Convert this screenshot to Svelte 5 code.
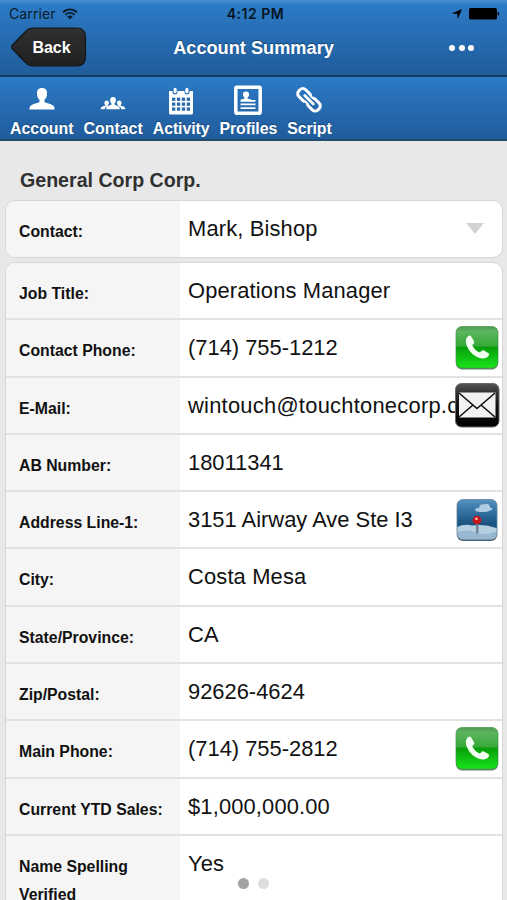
<script lang="ts">
  type Row = { label: string; value: string; action?: "phone" | "mail" | "map" };

  const tabs = ["Account", "Contact", "Activity", "Profiles", "Script"];

  const rows: Row[] = [
    { label: "Job Title:", value: "Operations Manager" },
    { label: "Contact Phone:", value: "(714) 755-1212", action: "phone" },
    { label: "E-Mail:", value: "wintouch@touchtonecorp.com", action: "mail" },
    { label: "AB Number:", value: "18011341" },
    { label: "Address Line-1:", value: "3151 Airway Ave Ste I3", action: "map" },
    { label: "City:", value: "Costa Mesa" },
    { label: "State/Province:", value: "CA" },
    { label: "Zip/Postal:", value: "92626-4624" },
    { label: "Main Phone:", value: "(714) 755-2812", action: "phone" },
    { label: "Current YTD Sales:", value: "$1,000,000.00" },
    { label: "Name Spelling Verified", value: "Yes" },
  ];

  let activePage = $state(0);
</script>

<div class="screen">
  <header>
    <div class="status-bar">
      <div class="carrier">
        <span>Carrier</span>
        <svg width="16" height="12" viewBox="0 0 16 12" fill="none" stroke="#0b1c2c" stroke-width="1.8">
          <path d="M1 4.4C5 .4 11 .4 15 4.4" />
          <path d="M3.4 6.8c2.7-2.5 6.5-2.5 9.2 0" />
          <path d="M5.3 8.5c1.6-1.5 3.8-1.5 5.4 0L8 11.4z" fill="#0b1c2c" stroke="none" />
        </svg>
      </div>
      <span class="time">4:12 PM</span>
      <div class="battery">
        <svg width="12" height="12" viewBox="0 0 12 12">
          <path d="M11 1 6.9 11 6.3 6.1.8 5.5z" />
        </svg>
        <svg width="31" height="12" viewBox="0 0 31 12">
          <rect x="0" y="0" width="28" height="11.5" rx="1.5" />
          <path d="M28.7 3.8c2 .6 2 3.4 0 4z" />
        </svg>
      </div>
    </div>
    <div class="title-bar">
      <button class="back" type="button">
        <svg width="77" height="42" viewBox="0 0 77 42">
          <defs>
            <linearGradient id="back-fill" x2="0" y2="1">
              <stop offset="0" stop-color="#303030" />
              <stop offset="1" stop-color="#202020" />
            </linearGradient>
          </defs>
          <path
            d="M23 1h43.500q9 0 9 9v20q0 9-9 9H23q-5 0-8-4L2.500 22q-2-2 0-4L15 5q3-4 8-4z"
            fill="url(#back-fill)"
            stroke="#10161c"
            stroke-width="1.2"
          />
        </svg>
        <span>Back</span>
      </button>
      <h1>Account Summary</h1>
      <button class="more" type="button" aria-label="More">
        <i></i><i></i><i></i>
      </button>
    </div>
  </header>

  <nav>
    {#each tabs as tab}
      <button class="tab" type="button">
        <span class="tab-icon">
          {#if tab === "Account"}
            <svg width="26" height="30" viewBox="0 0 26 30" fill="#fff">
              <path d="M13 3c-3.500 0-5.200 2.200-5 5.500 0 3.200 1.100 5.300 2.500 6.300V17c-1.200 1-8.500 2.300-9.500 4.500-.6 1-.6 2-.5 3h25c.1-1 .1-2-.5-3-1-2.200-8.300-3.500-9.500-4.500v-2.200c1.400-1 2.500-3.100 2.500-6.300.2-3.300-1.500-5.500-5-5.500z" />
            </svg>
          {:else if tab === "Contact"}
            <svg width="26" height="30" viewBox="0 0 26 30" fill="#fff">
              <path d="M13 12c-2 0-3 1.300-2.900 3.200.1 1.700.7 2.600 1.400 3.200v1.200c-.8.9-4.600 1.200-5.100 3.100l-.2 1.500h13.600l-.2-1.500c-.5-1.900-4.300-2.200-5.100-3.100v-1.200c.7-.6 1.300-1.500 1.400-3.200C16 13.300 15 12 13 12z" />
              <path d="M6.800 15.500c2.600 0 2.700 3.500 1 4.800v.6c-1 .5-2.700.9-3.100 3.300H.7c0-3 2.800-2.700 4.600-3.400v-.6c-1.600-1.500-1-4.700 1.500-4.700z" />
              <path d="M19.200 15.500c-2.600 0-2.700 3.500-1 4.800v.6c1 .5 2.700.9 3.100 3.300h4c0-3-2.800-2.700-4.600-3.400v-.6c1.600-1.500 1-4.700-1.500-4.700z" />
            </svg>
          {:else if tab === "Activity"}
            <svg width="26" height="30" viewBox="0 0 26 30">
              <path d="M1 6h3.500v1.500q0 2 2.500 2t2.500-2V6h7v1.500q0 2 2.500 2t2.500-2V6H25v22q0 1.500-1.500 1.500h-21Q1 29.500 1 28z" fill="#fff" />
              <rect x="5.600" y="2.800" width="3" height="5.400" rx="1.500" fill="#fff" />
              <rect x="17.400" y="2.800" width="3" height="5.400" rx="1.500" fill="#fff" />
              <g fill="#2a6bad">
                {#each [12.600, 17.500, 22.400] as y}
                  {#each [4, 8.900, 13.800, 18.700] as x}
                    <rect {x} {y} width="3.300" height="3.300" />
                  {/each}
                {/each}
              </g>
            </svg>
          {:else if tab === "Profiles"}
            <svg width="28" height="30" viewBox="0 0 28 30" fill="#fff">
              <rect x="1.800" y="2.300" width="24.400" height="26" rx="1" fill="none" stroke="#fff" stroke-width="3.500" />
              <circle cx="12" cy="9.500" r="3.100" />
              <path d="M10.500 11h3v2.500l4 1.200v2H6.500v-2l4-1.200z" />
              <path d="M6.500 18.500h15v1.700h-15zM6.500 22.200h15v1.700h-15zM16.500 15h5v1.700h-5z" />
            </svg>
          {:else}
            <svg width="26" height="30" viewBox="0 0 26 30" fill="none">
              <g transform="translate(13 14.800) rotate(45)" stroke="#fff" stroke-width="3">
                <rect x="-13.500" y="-4.800" width="13.500" height="9.600" rx="4" />
                <rect x="0" y="-4.800" width="13.500" height="9.600" rx="4" />
                <path d="M-4 0H4" stroke="#276aad" stroke-width="5.600" />
                <path d="M-6 0H6" stroke-width="2.800" stroke-linecap="round" />
              </g>
            </svg>
          {/if}
        </span>
        <span class="tab-label">{tab}</span>
      </button>
    {/each}
  </nav>

  <main>
    <h2>General Corp Corp.</h2>

    <div class="card contact">
      <div class="row">
        <div class="label">Contact:</div>
        <div class="value">Mark, Bishop</div>
        <svg class="caret" width="18" height="11" viewBox="0 0 18 11">
          <path d="M0 0h18L9 11z" fill="#d2d2d2" />
        </svg>
      </div>
    </div>

    <div class="card details">
      {#each rows as row}
        <div class="row">
          <div class="label">{row.label}</div>
          <div
            class="value"
            class:numeric={/^[\d(]/.test(row.value)}
            class:email={row.action === "mail"}
          >
            {row.value}
          </div>
          {#if row.action}
            <button class="action" type="button" aria-label={row.action}>
              {#if row.action === "phone"}
                <svg width="44" height="45" viewBox="0 0 44 45">
                  <defs>
                    <linearGradient id="phone-fill" x2="0" y2="1">
                      <stop offset="0" stop-color="#4f9a52" />
                      <stop offset=".12" stop-color="#5cb55f" />
                      <stop offset=".47" stop-color="#36aa38" />
                      <stop offset=".5" stop-color="#079d0a" />
                      <stop offset="1" stop-color="#18e51b" />
                    </linearGradient>
                  </defs>
                  <rect x="1" y="2" width="42" height="42" rx="6" fill="#64826a" />
                  <rect x="1" y="1" width="42" height="41.500" rx="6" fill="url(#phone-fill)" stroke="#43964a" stroke-width=".7" />
                  <path d="M13 10.700c1.300-1.200 2.300-1 3 .1l2.900 4.700c.7 1.400.4 2.100-.8 3.100-1 .9-.8 1.500-.2 2.500 1.500 2.500 3.400 4.200 5.700 5.400 1.100.6 1.700.4 2.400-.5.9-1.200 1.800-1.600 2.900-1l4.300 2.500c1.200.8 1.200 1.800.4 2.800-1.700 2.200-4 2.900-6.400 2.600C18 31.900 11 22.500 10.900 15.900c0-2.200.7-3.900 2.100-5.200z" fill="#f4fff4" />
                </svg>
              {:else if row.action === "mail"}
                <svg width="46" height="46" viewBox="0 0 46 46">
                  <defs>
                    <linearGradient id="mail-fill" x2="0" y2="1">
                      <stop offset="0" stop-color="#555" />
                      <stop offset=".2" stop-color="#343434" />
                      <stop offset=".5" stop-color="#111" />
                      <stop offset="1" stop-color="#000" />
                    </linearGradient>
                  </defs>
                  <rect x="1.500" y="1.500" width="43.500" height="43.500" rx="6" fill="url(#mail-fill)" stroke="#686868" />
                  <path d="M5 10.500h36.500v25H5z" fill="#f2f2f2" />
                  <path d="m5 11 18 15.500L41 11M5 35l14-12M41 35 27 23" fill="none" stroke="#111" stroke-width="1.600" />
                </svg>
              {:else}
                <svg width="42" height="43" viewBox="0 0 42 43">
                  <defs>
                    <linearGradient id="sky" x2="0" y2="1">
                      <stop offset="0" stop-color="#5c97c2" />
                      <stop offset=".25" stop-color="#3a77a8" />
                      <stop offset=".6" stop-color="#195481" />
                      <stop offset="1" stop-color="#28648f" />
                    </linearGradient>
                    <clipPath id="tile"><rect x="1" y="1" width="40" height="40" rx="6" /></clipPath>
                  </defs>
                  <rect x="1" y="2" width="40" height="40.500" rx="6" fill="#4c5962" />
                  <g clip-path="url(#tile)">
                    <path d="M0 0h42v42H0z" fill="url(#sky)" />
                    <path d="M0 29q8-4 16-2 13-2 26 3v12H0z" fill="#b5cfe2" />
                    <path d="M0 34q12-4 20 0t22-2v10H0z" fill="#8baecb" opacity=".7" />
                    <path d="M19 12c0-2 2-3 4-2 0-4 3-5 5-4 3-2 6 0 6 3 3 0 3 3 0 3-3 2-12 2-15 0z" fill="#aecde2" />
                    <path d="M20 23h2.500v12H20z" fill="#6f8391" />
                    <circle cx="21" cy="21.500" r="4.300" fill="#c5161c" />
                    <circle cx="20.500" cy="20.300" r="1.400" fill="#ffb5b0" />
                  </g>
                  <rect x="1" y="1" width="40" height="40.500" rx="6" fill="none" stroke="#608298" stroke-width=".8" />
                </svg>
              {/if}
            </button>
          {/if}
        </div>
      {/each}
    </div>
  </main>

  <div class="pager">
    {#each [0, 1] as page}
      <button
        class="page-dot"
        class:active={page === activePage}
        type="button"
        aria-label="Page {page + 1}"
        onclick={() => (activePage = page)}
      ></button>
    {/each}
  </div>
</div>

<style>
  :global(body) {
    background: #e8e8e8;
  }

  .screen {
    position: relative;
    width: 507px;
    height: 900px;
    overflow: hidden;
    box-sizing: border-box;
    background: #e8e8e8;
    font-family: "Liberation Sans", Arial, sans-serif;
    color: #111;
  }

  .screen * {
    box-sizing: border-box;
  }

  button {
    padding: 0;
    border: none;
    background: none;
    font: inherit;
    color: inherit;
    cursor: pointer;
  }

  svg {
    display: block;
  }

  header {
    height: 77px;
    background: linear-gradient(#4b91d3, #2c7ac6 5px, #205c9b);
    border-bottom: 2px solid #103b60;
  }

  .status-bar {
    display: grid;
    grid-template-columns: 1fr auto 1fr;
    align-items: center;
    height: 27px;
    padding: 0 7px 0 9px;
    font-family: Inter, "Liberation Sans", sans-serif;
    font-size: 14px;
    color: #0b1c2c;
  }

  .carrier {
    display: flex;
    align-items: center;
    gap: 6px;
    letter-spacing: 0.1px;
  }

  .time {
    margin-left: 2px;
    font-size: 14px;
    font-weight: 600;
    letter-spacing: 0.5px;
    color: #071522;
  }

  .battery {
    display: flex;
    justify-content: flex-end;
    gap: 6px;
  }

  .title-bar {
    display: grid;
    grid-template-columns: 1fr auto 1fr;
    align-items: center;
    height: 42px;
    padding: 0 33px 0 10px;
    color: #fff;
    text-shadow: 0 -1px 1px rgba(0, 25, 60, 0.5);
  }

  .back {
    display: grid;
    width: 77px;
    height: 42px;
    align-items: center;
    font-size: 16px;
    font-weight: 700;
  }

  .back svg,
  .back span {
    grid-area: 1 / 1;
  }

  .back span {
    padding: 0 0 0 6px;
  }

  h1 {
    margin: 1px 0 0 23px;
    font-size: 18.2px;
    font-weight: 700;
    white-space: nowrap;
  }

  .more {
    display: flex;
    gap: 3.5px;
    justify-self: end;
  }

  .more i {
    width: 6px;
    height: 6px;
    border-radius: 50%;
    background: #fff;
  }

  nav {
    display: flex;
    align-items: flex-start;
    gap: 10px;
    height: 64px;
    padding: 8px 10px 0;
    background: linear-gradient(#2c7ac6, #205c9b);
    border-bottom: 2px solid #234c70;
    color: #fff;
  }

  .tab {
    display: flex;
    flex-direction: column;
    align-items: center;
  }

  .tab-icon {
    height: 33px;
  }

  .tab-label {
    font-size: 15.9px;
    font-weight: 700;
    line-height: 22px;
    text-shadow: 0 -1px 1px rgba(0, 25, 60, 0.4);
  }

  .tab:nth-child(n + 3) .tab-label {
    letter-spacing: -0.08px;
  }

  h2 {
    height: 59px;
    margin: 0;
    padding: 28px 20px 0;
    font-size: 19.6px;
    font-weight: 700;
    line-height: 22px;
    color: #303030;
  }

  .card {
    margin: 0 4px 4px 5px;
    overflow: hidden;
    border: 1px solid #d6d6d6;
    border-radius: 10px;
    background: #fff;
  }

  .contact {
    height: 58px;
  }

  .details {
    border-radius: 10px 10px 0 0;
  }

  .row {
    position: relative;
    display: flex;
    height: 57.3px;
    border-bottom: 2px solid #e2e2e2;
  }

  .contact .row {
    border-bottom: none;
  }

  .details .row:last-child {
    height: 86px;
  }

  .label {
    flex: none;
    width: 174px;
    padding: 17px 12px 0 13px;
    background: #f5f5f5;
    font-size: 15.8px;
    font-weight: 700;
    line-height: 28px;
  }

  .value {
    flex: 1;
    padding: 13px 0 0 8px;
    font-size: 21.9px;
    line-height: 29px;
    letter-spacing: 0.15px;
    white-space: nowrap;
    overflow: hidden;
  }

  .value.numeric {
    letter-spacing: 0;
  }

  .value.email {
    letter-spacing: 0.25px;
  }

  .caret {
    position: absolute;
    top: 22px;
    right: 18px;
  }

  /* the action button lies over long values */
  .action {
    position: absolute;
    top: 50%;
    right: 2px;
    display: flex;
    justify-content: center;
    width: 46px;
    transform: translateY(-50%);
  }

  .pager {
    position: absolute;
    bottom: 11px;
    left: 238px;
    display: flex;
    gap: 9px;
  }

  .page-dot {
    width: 11px;
    height: 11px;
    border-radius: 50%;
    background: #dedede;
  }

  .page-dot.active {
    background: #a2a2a2;
  }
</style>
